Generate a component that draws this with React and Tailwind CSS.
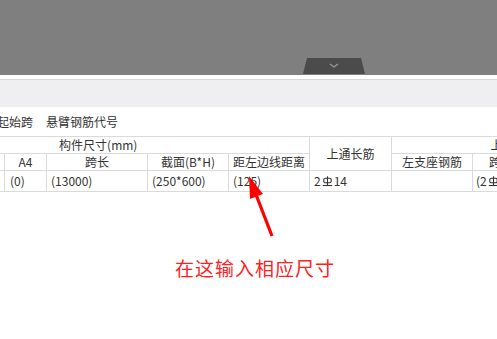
import React from "react";

const font = { fontFamily: '"Noto Sans CJK SC", "Noto Sans", sans-serif' };

function Tab() {
    return (
        <svg width="64" height="18" viewBox="0 0 64 18" className="block">
            <polygon points="4,1 58,1 62,17 0,17" fill="#4b4b4b" />
            <polyline points="27,7 31,10 35,7" fill="none" stroke="#9a9a9a" strokeWidth="1.2" />
        </svg>
    );
}

// rebar grade symbol
function Rebar() {
    return (
        <svg width="11" height="11" viewBox="0 0 11 11" className="inline-block align-[-1px] mx-[1px]">
            <rect x="1.8" y="2.2" width="7.4" height="4.6" rx="1.6" fill="none" stroke="#333" strokeWidth="1.1" />
            <line x1="5.5" y1="0.3" x2="5.5" y2="9.5" stroke="#333" strokeWidth="1.1" />
            <line x1="0.8" y1="9.5" x2="10.2" y2="9.5" stroke="#333" strokeWidth="1.1" />
        </svg>
    );
}

function Arrow() {
    return (
        <svg className="absolute left-0 top-0 pointer-events-none" width="497" height="339">
            <line x1="272" y1="236" x2="255" y2="192" stroke="#ff0000" strokeWidth="3.2" />
            <polygon points="249,176 263,194 250,199" fill="#ff0000" />
        </svg>
    );
}

export default function App() {
    const td = "border border-[#dadada] p-0 leading-none whitespace-nowrap overflow-hidden";
    return (
        <div className="relative w-[497px] h-[339px] bg-white overflow-hidden text-[#333] text-[12px]" style={font}>
            <div className="h-[75px] bg-[#7f7f7f] flex items-end pl-[303px]">
                <Tab />
            </div>
            <div className="h-[4px] bg-white" />
            <div className="h-[28px] bg-[#efeff1] border-t border-[#d6d6d6]" />
            <div className="h-[29px] flex items-center gap-[13px] ml-[-3px]">
                <span>起始跨</span>
                <span>悬臂钢筋代号</span>
            </div>
            <div className="ml-[-113px]">
                <table className="table-fixed border-collapse w-[750px]">
                    <colgroup>
                        <col className="w-[117px]" />
                        <col className="w-[42px]" />
                        <col className="w-[101px]" />
                        <col className="w-[81px]" />
                        <col className="w-[81px]" />
                        <col className="w-[82px]" />
                        <col className="w-[81px]" />
                        <col className="w-[81px]" />
                        <col className="w-[84px]" />
                    </colgroup>
                    <tbody>
                        <tr className="h-[17px]">
                            <td colSpan={5} className={td + " text-center border-l-0"}>构件尺寸(mm)</td>
                            <td rowSpan={2} className={td + " text-center"}>上通长筋</td>
                            <td colSpan={3} className={td + " text-center"}>上部钢筋</td>
                        </tr>
                        <tr className="h-[17px]">
                            <td className={td}></td>
                            <td className={td + " text-center"}>A4</td>
                            <td className={td + " text-center"}>跨长</td>
                            <td className={td + " text-center"}>截面(B*H)</td>
                            <td className={td + " text-center"}>距左边线距离</td>
                            <td className={td + " text-center"}>左支座钢筋</td>
                            <td className={td + " text-center"}>跨中钢筋</td>
                            <td className={td}></td>
                        </tr>
                        <tr className="h-[21px]">
                            <td className={td}></td>
                            <td className={td + " pl-[5px]"}>(0)</td>
                            <td className={td + " pl-[4px]"}>(13000)</td>
                            <td className={td + " pl-[4px]"}>(250*600)</td>
                            <td className={td + " pl-[4px]"}>(125)</td>
                            <td className={td + " pl-[4px]"}>2<Rebar />14</td>
                            <td className={td}></td>
                            <td className={td + " pl-[3px]"}>(2<Rebar />14)</td>
                            <td className={td}></td>
                        </tr>
                    </tbody>
                </table>
            </div>
            <div className="mt-[66px] pl-[175px] text-[19px] leading-none tracking-[1px] text-[#ff2020]">
                在这输入相应尺寸
            </div>
            <Arrow />
        </div>
    );
}
